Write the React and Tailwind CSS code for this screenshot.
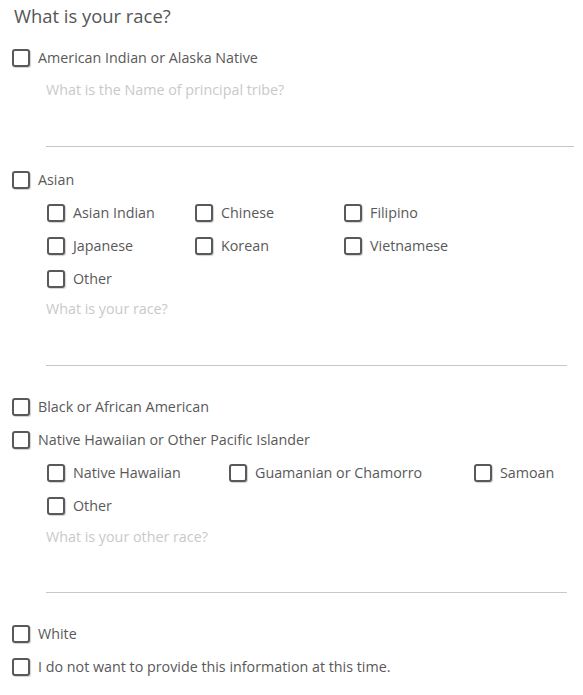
import { useState } from "react";

const font = { fontFamily: '"Open Sans", "Liberation Sans", sans-serif' };

function Check({ label, checked, onChange }) {
  return (
    <label className="flex items-center gap-2 h-[33px] cursor-pointer select-none">
      <input
        type="checkbox"
        checked={checked}
        onChange={onChange}
        className="appearance-none shrink-0 w-[18px] h-[18px] border-2 border-[#595959] rounded-[3px] bg-white shadow-[1px_1px_1px_rgba(0,0,0,0.18)] checked:bg-[#595959] cursor-pointer"
      />
      <span className="text-[14.3px] text-[#595959] whitespace-nowrap">{label}</span>
    </label>
  );
}

function Field({ placeholder, className }) {
  return (
    <textarea
      placeholder={placeholder}
      className={`block ml-[34px] p-0 resize-none outline-none border-0 border-b border-[#c8c8c8] text-[14.3px] leading-[20px] text-[#595959] placeholder:text-[#c9c9c9] bg-transparent ${className}`}
    />
  );
}

const asian = ["Asian Indian", "Chinese", "Filipino", "Japanese", "Korean", "Vietnamese", "Other"];
const pacific = ["Native Hawaiian", "Guamanian or Chamorro", "Samoan", "Other"];

export default function App() {
  const [checked, setChecked] = useState({});
  const toggle = (key) => () => setChecked({ ...checked, [key]: !checked[key] });

  return (
    <div className="min-h-screen bg-white pl-3" style={font}>
      <h1 className="h-[32px] leading-[31px] pl-[2px] text-[18.4px] text-[#555555]">
        What is your race?
      </h1>

      <div className="mt-[9px]">
        <Check label="American Indian or Alaska Native" checked={!!checked.aian} onChange={toggle("aian")} />
        <Field placeholder="What is the Name of principal tribe?" className="mt-[6px] w-[528px] h-[67px]" />

        <div className="mt-[16px]">
          <Check label="Asian" checked={!!checked.asian} onChange={toggle("asian")} />
        </div>
        <div className="ml-[35px] grid grid-cols-[148px_149px_auto]">
          {asian.map((a) => (
            <Check key={a} label={a} checked={!!checked["asian-" + a]} onChange={toggle("asian-" + a)} />
          ))}
        </div>
        <Field placeholder="What is your race?" className="mt-[4px] w-[521px] h-[67px]" />

        <div className="mt-[24px]">
          <Check label="Black or African American" checked={!!checked.black} onChange={toggle("black")} />
          <Check
            label="Native Hawaiian or Other Pacific Islander"
            checked={!!checked.nhpi}
            onChange={toggle("nhpi")}
          />
        </div>
        <div className="ml-[35px] grid grid-cols-[182px_245px_auto]">
          {pacific.map((p) => (
            <Check key={p} label={p} checked={!!checked["pi-" + p]} onChange={toggle("pi-" + p)} />
          ))}
        </div>
        <Field placeholder="What is your other race?" className="mt-[5px] w-[521px] h-[66px]" />

        <div className="mt-[24px]">
          <Check label="White" checked={!!checked.white} onChange={toggle("white")} />
          <Check
            label="I do not want to provide this information at this time."
            checked={!!checked.none}
            onChange={toggle("none")}
          />
        </div>
      </div>
    </div>
  );
}
